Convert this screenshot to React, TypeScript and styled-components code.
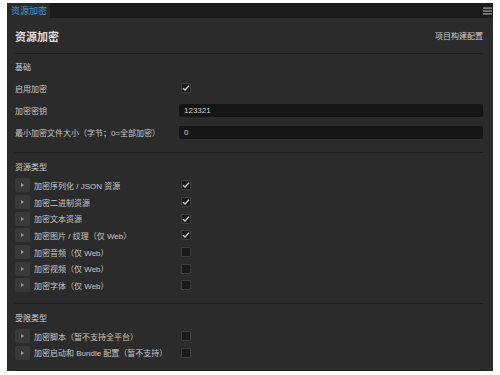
import React from 'react'
import styled, { createGlobalStyle } from 'styled-components'

const GlobalStyle = createGlobalStyle`
  html, body {
    margin: 0;
    padding: 0;
    background: #ffffff;
  }
  body {
    font-family: "Liberation Sans", "Noto Sans CJK SC", sans-serif;
  }
`

const Panel = styled.div`
  display: flex;
  flex-direction: column;
  width: 486px;
  height: 368px;
  margin: 3px 0 0 7px;
  background: #2b2b2b;
  overflow: hidden;
`

const TabBar = styled.div`
  display: flex;
  align-items: stretch;
  height: 16px;
  background: #1b1b1b;
`

const Tab = styled.div`
  display: flex;
  align-items: center;
  padding: 0 3px 0 4px;
  background: #2b2b2b;
  color: #3f9ad6;
  font-size: 9px;
`

const TabSpacer = styled.div`
  flex: 1;
`

const MenuButton = styled.div`
  display: flex;
  align-items: center;
  justify-content: center;
  width: 12px;
`

const Content = styled.div`
  display: flex;
  flex-direction: column;
  padding: 0 10px 0 8px;
`

const Header = styled.div`
  display: flex;
  align-items: center;
  justify-content: space-between;
  height: 35px;
  border-bottom: 1px solid #1d1d1d;
`

const Title = styled.div`
  color: #dedede;
  font-size: 11px;
  font-weight: bold;
`

const HeaderLink = styled.div`
  color: #cfcfcf;
  font-size: 8px;
`

const Section = styled.div<{ $top: number }>`
  display: flex;
  flex-direction: column;
  padding: ${p => p.$top}px 0 9px;
  border-bottom: 1px solid #1d1d1d;
`

const SectionLabel = styled.div`
  height: 13px;
  line-height: 13px;
  margin-bottom: 3px;
  color: #cfcfcf;
  font-size: 8px;
`

const Row = styled.div<{ $h: number }>`
  display: flex;
  align-items: center;
  height: ${p => p.$h}px;
`

const Label = styled.div`
  display: flex;
  align-items: center;
  gap: 4px;
  width: 164px;
  flex-shrink: 0;
  color: #c8c8c8;
  font-size: 8px;
  white-space: nowrap;
`

const FoldButton = styled.div`
  display: flex;
  align-items: center;
  justify-content: center;
  width: 15px;
  height: 14px;
  border-radius: 2px;
  background: #393939;
`

const Arrow = styled.span`
  width: 0;
  height: 0;
  border-top: 2px solid transparent;
  border-bottom: 2px solid transparent;
  border-left: 3px solid #9a9a9a;
`

const Input = styled.div`
  flex: 1;
  height: 13px;
  line-height: 13px;
  padding: 0 5px;
  border-radius: 2px;
  background: #151515;
  color: #cfcfcf;
  font-size: 8px;
`

const Box = styled.div`
  display: flex;
  align-items: center;
  justify-content: center;
  box-sizing: border-box;
  width: 10px;
  height: 10px;
  margin-left: 2px;
  border: 1px solid #3e3e3e;
  border-radius: 1px;
  background: #1a1a1a;
`

function Check({ on }: { on: boolean }) {
  return (
    <Box>
      {on && (
        <svg width="8" height="8" viewBox="0 0 8 8">
          <path d="M1 4.2 L3 6 L7 1.8" stroke="#cccccc" strokeWidth="1.4" fill="none" />
        </svg>
      )}
    </Box>
  )
}

const resources = [
  { name: '加密序列化 / JSON 资源', on: true },
  { name: '加密二进制资源', on: true },
  { name: '加密文本资源', on: true },
  { name: '加密图片 / 纹理（仅 Web）', on: true },
  { name: '加密音频（仅 Web）', on: false },
  { name: '加密视频（仅 Web）', on: false },
  { name: '加密字体（仅 Web）', on: false },
]

const limited = [
  { name: '加密脚本（暂不支持全平台）', on: false },
  { name: '加密启动和 Bundle 配置（暂不支持）', on: false },
]

function FoldRow({ name, on }: { name: string; on: boolean }) {
  return (
    <Row $h={16.67}>
      <Label>
        <FoldButton><Arrow /></FoldButton>
        {name}
      </Label>
      <Check on={on} />
    </Row>
  )
}

export default function App() {
  return (
    <>
      <GlobalStyle />
      <Panel>
        <TabBar>
          <Tab>资源加密</Tab>
          <TabSpacer />
          <MenuButton>
            <svg width="9" height="8" viewBox="0 0 9 8">
              <rect x="0" y="0.5" width="9" height="1.2" fill="#a8a8a8" />
              <rect x="0" y="3.4" width="9" height="1.2" fill="#a8a8a8" />
              <rect x="0" y="6.3" width="9" height="1.2" fill="#a8a8a8" />
            </svg>
          </MenuButton>
        </TabBar>
        <Content>
          <Header>
            <Title>资源加密</Title>
            <HeaderLink>项目构建配置</HeaderLink>
          </Header>

          <Section $top={7}>
            <SectionLabel>基础</SectionLabel>
            <Row $h={22}>
              <Label>启用加密</Label>
              <Check on />
            </Row>
            <Row $h={22}>
              <Label>加密密钥</Label>
              <Input>123321</Input>
            </Row>
            <Row $h={22}>
              <Label>最小加密文件大小（字节；0=全部加密）</Label>
              <Input>0</Input>
            </Row>
          </Section>

          <Section $top={8}>
            <SectionLabel>资源类型</SectionLabel>
            {resources.map((r, i) => (
              <FoldRow key={i} name={r.name} on={r.on} />
            ))}
          </Section>

          <Section $top={8}>
            <SectionLabel>受限类型</SectionLabel>
            {limited.map((r, i) => (
              <FoldRow key={i} name={r.name} on={r.on} />
            ))}
          </Section>
        </Content>
      </Panel>
    </>
  )
}
